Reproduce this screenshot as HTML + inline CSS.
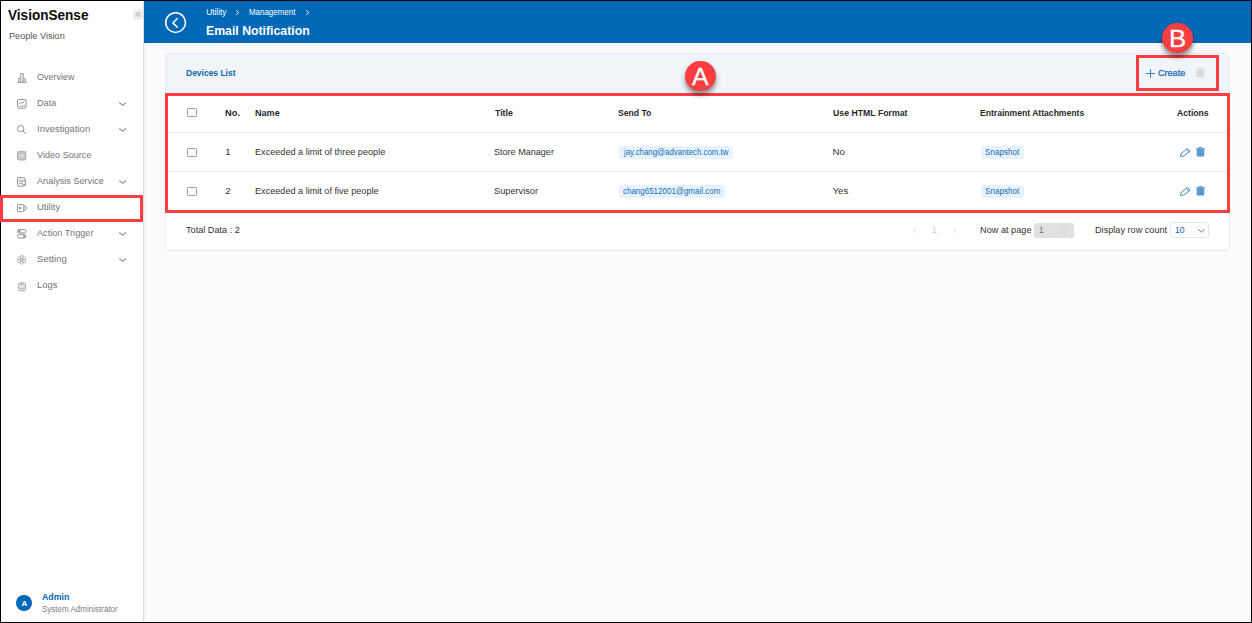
<!DOCTYPE html>
<html lang="en">
<head>
<meta charset="utf-8">
<title>VisionSense - Email Notification</title>
<style>
*{box-sizing:border-box;margin:0;padding:0}
html,body{width:1252px;height:623px;overflow:hidden;background:#fafbfd}
body{position:relative;font-family:"Liberation Sans",sans-serif;color:#333}
.abs{position:absolute}
.t{position:absolute;white-space:nowrap;line-height:1;transform-origin:0 50%}
svg{position:absolute;overflow:visible}
#frame{position:absolute;left:0;top:0;width:1252px;height:623px;border:1px solid #000;z-index:10;pointer-events:none}
#side{position:absolute;left:0;top:0;width:144px;height:623px;background:#fff;border-right:1px solid #dcdde0;box-shadow:1px 0 2px rgba(0,0,0,.06)}
#collapse{position:absolute;left:132.500px;top:9.300px;width:10.300px;height:10.400px;background:#efefef;border-radius:1px}
.ico *{fill:none;stroke:#939393;stroke-width:1}
.chev *{fill:none;stroke:#8f8f8f;stroke-width:1.050}
#hdr{position:absolute;left:144px;top:0;width:1108px;height:42.500px;background:#0068b7}
#card{position:absolute;left:165px;top:53px;width:1065px;height:197.500px;background:#fff;border:1px solid #e7eaee;border-radius:4px;overflow:hidden}
#cardhead{position:absolute;left:0;top:0;width:100%;height:40px;background:#f1f5f9}
.sep{position:absolute;left:166px;width:1063px;height:1px;background:#ececec}
.cb{position:absolute;left:187px;width:9.600px;height:9.200px;border:1px solid #9a9a9a;border-radius:1.200px;background:#fff}
.tag{position:absolute;height:12.800px;background:#e6f3fe;border-radius:2.500px}
.red{position:absolute;border:3px solid #f93d40;z-index:20}
.badge{position:absolute;width:31px;height:30.500px;border-radius:50%;background:#f93d40;box-shadow:0 4px 5px rgba(0,0,0,.45);z-index:25}
</style>
</head>
<body>
<aside>
<div id="side"></div>
<div id="collapse"></div>
<svg style="left:132.500px;top:9.300px" width="10.300" height="10.400" viewBox="0 0 10.300 10.400"><path d="M5 3 L3 5.300 L5 7.600 M7.600 3 L5.600 5.300 L7.600 7.600" fill="none" stroke="#9b9b9b" stroke-width=".8"/></svg>
<svg class="ico" style="left:17.2px;top:73px" width="10" height="10" viewBox="0 0 10 10"><path d="M.5 9.300h9M1.700 9.300v-4.300h2.100M3.800 9.300v-8.800h2.400v8.800M6.200 5.800h2v3.500"/></svg>
<svg class="ico" style="left:17px;top:99.2px" width="10" height="10" viewBox="0 0 10 10"><rect x=".5" y=".5" width="8.700" height="8.700" rx="1.500"/><path d="M2 5l1.800-1.800 1.300 1.200 2.500-2.200M2.400 8v-.8M4 8v-1.600M5.600 8v-1.200M7.200 8v-2.200"/></svg>
<svg class="ico" style="left:17.2px;top:125px" width="10" height="10" viewBox="0 0 10 10"><circle cx="3.600" cy="3.600" r="3.100"/><path d="M5.900 5.900l2.900 2.900"/></svg>
<svg class="ico" style="left:17.2px;top:151.2px" width="10" height="10" viewBox="0 0 10 10"><rect x=".4" y=".4" width="8.400" height="8.600" rx="1.300" style="fill:#bdbdbd;stroke:#a3a3a3;stroke-width:.8"/><path d="M1.300 2.300h6.600M1.300 7.100h6.600" style="stroke:#d9d9d9;stroke-width:.6"/><path d="M3.100 3.300l-1.700 1.400 1.700 1.400z" style="fill:#fff;stroke:none"/><path d="M4.300 3.400l1.700 1.300-1.700 1.300M6 4.700h1.600" style="stroke:#fff;stroke-width:.9;fill:none"/></svg>
<svg class="ico" style="left:17.2px;top:177.2px" width="10" height="10" viewBox="0 0 10 10"><rect x=".5" y=".5" width="7.600" height="8.600" rx="1.400"/><path d="M2 2.900h4.300M2 4.700h2.300M2 6.500h2.300" style="stroke-width:.8"/><circle cx="6.700" cy="5.800" r="1.900" style="fill:#fff"/><path d="M8 7.200l1.100 1.100"/></svg>
<svg class="ico" style="left:17.2px;top:203.6px" width="10" height="10" viewBox="0 0 10 10"><rect x=".5" y=".5" width="6.300" height="7.200" rx="1"/><path d="M2.200 2.500l2.700 1.600-2.700 1.600z" style="fill:#8c8c8c;stroke:none"/><path d="M6.800 2h1.200a1 1 0 0 1 1 1v2.200a1 1 0 0 1-1 1h-1.200"/></svg>
<svg class="ico" style="left:17.2px;top:228.8px" width="10" height="10" viewBox="0 0 10 10"><rect x=".5" y=".5" width="8.500" height="3.400" rx="1.700"/><rect x=".5" y="5.600" width="8.500" height="3.400" rx="1.700"/><circle cx="2.400" cy="2.200" r="1.100" style="fill:#8c8c8c;stroke:none"/><circle cx="7.100" cy="7.300" r="1.100" style="fill:#8c8c8c;stroke:none"/></svg>
<svg class="ico" style="left:17.1px;top:255.2px" width="10" height="10" viewBox="0 0 10 10"><circle cx="4.70" cy="2.00" r="1.75" style="stroke-width:.7;stroke:#a3a3a3"/><circle cx="2.32" cy="3.38" r="1.75" style="stroke-width:.7;stroke:#a3a3a3"/><circle cx="2.32" cy="6.12" r="1.75" style="stroke-width:.7;stroke:#a3a3a3"/><circle cx="4.70" cy="7.50" r="1.75" style="stroke-width:.7;stroke:#a3a3a3"/><circle cx="7.08" cy="6.13" r="1.75" style="stroke-width:.7;stroke:#a3a3a3"/><circle cx="7.08" cy="3.38" r="1.75" style="stroke-width:.7;stroke:#a3a3a3"/><circle cx="4.7" cy="4.75" r="1.100" style="stroke-width:.7;fill:#fff"/></svg>
<svg class="ico" style="left:18.1px;top:281.5px" width="10" height="10" viewBox="0 0 10 10"><rect x=".5" y="1.600" width="7" height="7.100" rx="1.100" style="fill:#e2e2e2;stroke:#a6a6a6;stroke-width:.9"/><rect x="2.400" y=".4" width="3.200" height="2" rx=".7" style="fill:#e2e2e2;stroke:#a6a6a6;stroke-width:.8"/><path d="M1.800 6.500h4.400" style="stroke:#b5b5b5;stroke-width:.8"/></svg>
<svg class="chev" style="left:119px;top:102px" width="7.400" height="4" viewBox="0 0 7.400 4"><path d="M.3 .5L3.700 3.300 7.100 .5"/></svg>
<svg class="chev" style="left:119px;top:128px" width="7.400" height="4" viewBox="0 0 7.400 4"><path d="M.3 .5L3.700 3.300 7.100 .5"/></svg>
<svg class="chev" style="left:119px;top:180px" width="7.400" height="4" viewBox="0 0 7.400 4"><path d="M.3 .5L3.700 3.300 7.100 .5"/></svg>
<svg class="chev" style="left:119px;top:232px" width="7.400" height="4" viewBox="0 0 7.400 4"><path d="M.3 .5L3.700 3.300 7.100 .5"/></svg>
<svg class="chev" style="left:119px;top:258px" width="7.400" height="4" viewBox="0 0 7.400 4"><path d="M.3 .5L3.700 3.300 7.100 .5"/></svg>
<div class="abs" style="left:16.200px;top:595px;width:16px;height:16px;border-radius:50%;background:#0068b7"></div>
<div class="t" id="brand" style="left:8.43px;top:6.85px;font-size:15px;font-weight:700;color:#0b0b0b;transform:scaleX(0.9048)">VisionSense</div>
<div class="t" id="sub" style="left:8.98px;top:30.66px;font-size:9.7px;font-weight:400;color:#555;transform:scaleX(0.9434)">People Vision</div>
<div class="t" id="m0" style="left:37.16px;top:72.49px;font-size:9.7px;font-weight:400;color:#757575;transform:scaleX(0.9269)">Overview</div>
<div class="t" id="m1" style="left:36.58px;top:98.09px;font-size:9.7px;font-weight:400;color:#757575;transform:scaleX(0.9403)">Data</div>
<div class="t" id="m2" style="left:36.82px;top:124.49px;font-size:9.7px;font-weight:400;color:#757575;transform:scaleX(0.9772)">Investigation</div>
<div class="t" id="m3" style="left:36.94px;top:150.48px;font-size:9.7px;font-weight:400;color:#757575;transform:scaleX(0.9389)">Video Source</div>
<div class="t" id="m4" style="left:37.42px;top:176.09px;font-size:9.7px;font-weight:400;color:#757575;transform:scaleX(0.9396)">Analysis Service</div>
<div class="t" id="m5" style="left:36.59px;top:202.09px;font-size:9.7px;font-weight:400;color:#757575;transform:scaleX(0.9785)">Utility</div>
<div class="t" id="m6" style="left:37.42px;top:228.09px;font-size:9.7px;font-weight:400;color:#757575;transform:scaleX(0.9448)">Action Trigger</div>
<div class="t" id="m7" style="left:36.80px;top:254.49px;font-size:9.7px;font-weight:400;color:#757575;transform:scaleX(0.9871)">Setting</div>
<div class="t" id="m8" style="left:36.53px;top:280.09px;font-size:9.7px;font-weight:400;color:#757575;transform:scaleX(0.9765)">Logs</div>
<div class="t" id="ava" style="left:21.51px;top:599.83px;font-size:8px;font-weight:700;color:#fff;transform:scaleX(1.0000)">A</div>
<div class="t" id="adm" style="left:42.47px;top:592.71px;font-size:9.3px;font-weight:700;color:#0a66b3;transform:scaleX(0.9449)">Admin</div>
<div class="t" id="sys" style="left:42.14px;top:605.06px;font-size:8.3px;font-weight:400;color:#7d7d7d;transform:scaleX(0.9663)">System Administrator</div>
</aside>
<header>
<div id="hdr"></div>
<svg style="left:164.800px;top:11.900px" width="21.200" height="21.200" viewBox="0 0 21.200 21.200"><circle cx="10.600" cy="10.600" r="9.850" fill="none" stroke="#fff" stroke-width="1.500"/><path d="M12.700 6.200L7.900 10.900l4.800 4.700" fill="none" stroke="#fff" stroke-width="1.500"/></svg>
<svg style="left:236.3px;top:9.800px" width="3.200" height="5" viewBox="0 0 3.200 5"><path d="M.3 .2L2.800 2.500 .3 4.800" fill="none" stroke="#fff" stroke-width=".95"/></svg>
<svg style="left:306px;top:9.800px" width="3.200" height="5" viewBox="0 0 3.200 5"><path d="M.3 .2L2.800 2.500 .3 4.800" fill="none" stroke="#fff" stroke-width=".95"/></svg>
<div class="t" id="bc1" style="left:206.22px;top:7.77px;font-size:8.3px;font-weight:400;color:#fff;transform:scaleX(1.0000)">Utility</div>
<div class="t" id="bc2" style="left:249.18px;top:7.77px;font-size:8.3px;font-weight:400;color:#fff;transform:scaleX(0.9574)">Management</div>
<div class="t" id="title" style="left:206.48px;top:23.55px;font-size:13.6px;font-weight:700;color:#fff;transform:scaleX(0.9032)">Email Notification</div>
</header>
<main>
<div id="card"><div id="cardhead"></div></div>
<svg style="left:1146px;top:68.700px" width="9" height="9" viewBox="0 0 9 9"><path d="M4.500 0v9M0 4.500h9" stroke="#2a7cc0" stroke-width=".9" fill="none"/></svg>
<svg style="left:1196.4px;top:68.3px" width="9" height="9.400" viewBox="0 0 9 9.400"><path d="M0 1.900h9M3 1.700v-1.200h3v1.200" fill="none" stroke="#d4d4d4" stroke-width=".8"/><path d="M1 2.300h7v6.300a.6 .6 0 0 1-.6 .6h-5.800a.6 .6 0 0 1-.6-.6z" fill="#dcdcdc" stroke="#d4d4d4" stroke-width=".5"/><path d="M3.100 3.300v4.800M4.500 3.300v4.800M5.900 3.300v4.800" fill="none" stroke="#d4d4d4" stroke-width=".55" opacity=".75"/></svg>
<div class="cb" style="top:107.800px"></div>
<div class="sep" style="top:132px"></div>
<div class="sep" style="top:171px"></div>
<div class="cb" style="top:147.6px"></div>
<div class="tag" style="left:618.800px;top:145.9px;width:113.9px"></div>
<div class="tag" style="left:980.700px;top:145.9px;width:43.200px"></div>
<svg style="left:1179.700px;top:148.0px" width="10.400" height="8.800" viewBox="0 0 10.400 8.800"><path d="M.5 8.300l.5-2.300 5.600-5a1.200 1.200 0 0 1 1.600 .1l1.200 1.300a1 1 0 0 1-.1 1.400l-5.700 4.300zM6.200 1.400l2.700 2.800" fill="none" stroke="#2a7cc0" stroke-width=".9"/></svg>
<svg style="left:1196.3px;top:147.4px" width="9" height="9.400" viewBox="0 0 9 9.400"><path d="M0 1.900h9M3 1.700v-1.200h3v1.200" fill="none" stroke="#2f7fc3" stroke-width=".8"/><path d="M1 2.300h7v6.300a.6 .6 0 0 1-.6 .6h-5.800a.6 .6 0 0 1-.6-.6z" fill="#68a5d9" stroke="#2f7fc3" stroke-width=".5"/><path d="M3.100 3.300v4.800M4.500 3.300v4.800M5.900 3.300v4.800" fill="none" stroke="#2f7fc3" stroke-width=".55" opacity=".75"/></svg>
<div class="cb" style="top:186.5px"></div>
<div class="tag" style="left:618.800px;top:184.8px;width:106px"></div>
<div class="tag" style="left:980.700px;top:184.8px;width:43.200px"></div>
<svg style="left:1179.700px;top:186.9px" width="10.400" height="8.800" viewBox="0 0 10.400 8.800"><path d="M.5 8.300l.5-2.300 5.600-5a1.200 1.200 0 0 1 1.600 .1l1.200 1.300a1 1 0 0 1-.1 1.400l-5.700 4.300zM6.200 1.400l2.700 2.800" fill="none" stroke="#2a7cc0" stroke-width=".9"/></svg>
<svg style="left:1196.3px;top:186.3px" width="9" height="9.400" viewBox="0 0 9 9.400"><path d="M0 1.900h9M3 1.700v-1.200h3v1.200" fill="none" stroke="#2f7fc3" stroke-width=".8"/><path d="M1 2.300h7v6.300a.6 .6 0 0 1-.6 .6h-5.800a.6 .6 0 0 1-.6-.6z" fill="#68a5d9" stroke="#2f7fc3" stroke-width=".5"/><path d="M3.100 3.300v4.800M4.500 3.300v4.800M5.900 3.300v4.800" fill="none" stroke="#2f7fc3" stroke-width=".55" opacity=".75"/></svg>
<svg style="left:913px;top:228px" width="3.200" height="5" viewBox="0 0 3.200 5"><path d="M2.800 .3L.4 2.500 2.800 4.700" fill="none" stroke="#d2d2d2" stroke-width=".8"/></svg>
<svg style="left:953px;top:228px" width="3.200" height="5" viewBox="0 0 3.200 5"><path d="M.4 .3L2.800 2.500 .4 4.700" fill="none" stroke="#d2d2d2" stroke-width=".8"/></svg>
<div class="abs" style="left:1034px;top:222.800px;width:39.700px;height:15.200px;background:#e1e1e1;border-radius:2.500px"></div>
<svg style="left:1060.600px;top:226.300px" width="5.700" height="8.200" viewBox="0 0 5.700 8.200"><path d="M.4 3.200L2.850 .7 5.300 3.200M.4 5L2.850 7.500 5.300 5" fill="none" stroke="#cdcdcd" stroke-width=".8"/></svg>
<div class="abs" style="left:1169.500px;top:222.300px;width:39.100px;height:15.700px;background:#fff;border:1px solid #e6e6e6;border-radius:3px"></div>
<svg style="left:1198px;top:228.700px" width="6.800" height="3.600" viewBox="0 0 6.800 3.600"><path d="M.4 .4L3.400 3.100 6.400 .4" fill="none" stroke="#2a7cc0" stroke-width=".9"/></svg>
<div class="t" id="dev" style="left:186.29px;top:67.98px;font-size:9.5px;font-weight:700;color:#0a66b3;transform:scaleX(0.8932)">Devices List</div>
<div class="t" id="create" style="left:1158.07px;top:68.43px;font-size:9.7px;font-weight:400;color:#1266b4;transform:scaleX(0.9364);-webkit-text-stroke:.25px #1266b4">Create</div>
<div class="t" id="h0" style="left:225.12px;top:107.80px;font-size:9.5px;font-weight:700;color:#292929;transform:scaleX(0.9782)">No.</div>
<div class="t" id="h1" style="left:255.27px;top:107.80px;font-size:9.5px;font-weight:700;color:#292929;transform:scaleX(0.9560)">Name</div>
<div class="t" id="h2" style="left:494.69px;top:107.80px;font-size:9.5px;font-weight:700;color:#292929;transform:scaleX(0.9213)">Title</div>
<div class="t" id="h3" style="left:618.09px;top:107.80px;font-size:9.5px;font-weight:700;color:#292929;transform:scaleX(0.9054)">Send To</div>
<div class="t" id="h4" style="left:832.98px;top:107.80px;font-size:9.5px;font-weight:700;color:#292929;transform:scaleX(0.9181)">Use HTML Format</div>
<div class="t" id="h5" style="left:980.34px;top:107.80px;font-size:9.5px;font-weight:700;color:#292929;transform:scaleX(0.9038)">Entrainment Attachments</div>
<div class="t" id="h6" style="left:1176.86px;top:107.80px;font-size:9.5px;font-weight:700;color:#292929;transform:scaleX(0.9082)">Actions</div>
<div class="t" id="r1a" style="left:225.15px;top:146.79px;font-size:9.7px;font-weight:400;color:#333;transform:scaleX(1.0000)">1</div>
<div class="t" id="r1b" style="left:255.34px;top:146.79px;font-size:9.7px;font-weight:400;color:#333;transform:scaleX(0.9409)">Exceeded a limit of three people</div>
<div class="t" id="r1c" style="left:493.93px;top:146.79px;font-size:9.7px;font-weight:400;color:#333;transform:scaleX(0.9351)">Store Manager</div>
<div class="t" id="r1d" style="left:623.59px;top:148.33px;font-size:8.3px;font-weight:400;color:#1a6bb3;transform:scaleX(0.9473)">jay.chang@advantech.com.tw</div>
<div class="t" id="r1e" style="left:832.52px;top:146.79px;font-size:9.7px;font-weight:400;color:#333;transform:scaleX(1.0000)">No</div>
<div class="t" id="r1f" style="left:985.10px;top:148.33px;font-size:8.3px;font-weight:400;color:#1a6bb3;transform:scaleX(0.9760)">Snapshot</div>
<div class="t" id="r2a" style="left:225.34px;top:185.79px;font-size:9.7px;font-weight:400;color:#333;transform:scaleX(1.0000)">2</div>
<div class="t" id="r2b" style="left:255.31px;top:185.79px;font-size:9.7px;font-weight:400;color:#333;transform:scaleX(0.9402)">Exceeded a limit of five people</div>
<div class="t" id="r2c" style="left:494.11px;top:185.79px;font-size:9.7px;font-weight:400;color:#333;transform:scaleX(0.9515)">Supervisor</div>
<div class="t" id="r2d" style="left:623.48px;top:187.07px;font-size:8.3px;font-weight:400;color:#1a6bb3;transform:scaleX(0.9619)">chang6512001@gmail.com</div>
<div class="t" id="r2e" style="left:832.52px;top:185.79px;font-size:9.7px;font-weight:400;color:#333;transform:scaleX(1.0000)">Yes</div>
<div class="t" id="r2f" style="left:985.10px;top:187.07px;font-size:8.3px;font-weight:400;color:#1a6bb3;transform:scaleX(0.9760)">Snapshot</div>
<div class="t" id="f0" style="left:186.17px;top:225.19px;font-size:9.7px;font-weight:400;color:#333;transform:scaleX(0.9421)">Total Data : 2</div>
<div class="t" id="f1" style="left:931.86px;top:225.19px;font-size:9.7px;font-weight:400;color:#cfcfcf;transform:scaleX(1.0000)">1</div>
<div class="t" id="f2" style="left:980.13px;top:225.19px;font-size:9.7px;font-weight:400;color:#333;transform:scaleX(0.9477)">Now at page</div>
<div class="t" id="f3" style="left:1039.01px;top:226.47px;font-size:8.4px;font-weight:400;color:#6b6b6b;transform:scaleX(1.0000)">1</div>
<div class="t" id="f4" style="left:1094.76px;top:225.19px;font-size:9.7px;font-weight:400;color:#333;transform:scaleX(0.9437)">Display row count</div>
<div class="t" id="f5" style="left:1175.06px;top:226.47px;font-size:8.4px;font-weight:400;color:#1266b4;transform:scaleX(1.0281)">10</div>
</main>
<div id="notes">
<div class="red" style="left:0;top:195px;width:143px;height:27px"></div>
<div class="red" style="left:165px;top:93px;width:1065px;height:120px"></div>
<div class="red" style="left:1136px;top:55px;width:83px;height:36px"></div>
<div class="badge" style="left:685px;top:60.600px"></div>
<div class="badge" style="left:1162px;top:22.800px"></div>
<div class="t" id="ba" style="left:692.01px;top:65.80px;font-size:23.2px;font-weight:400;color:#fff;transform:scaleX(1.0693);z-index:30;-webkit-text-stroke:.3px #fff">A</div>
<div class="t" id="bb" style="left:1168.72px;top:27.88px;font-size:23.2px;font-weight:400;color:#fff;transform:scaleX(1.1086);z-index:30;-webkit-text-stroke:.3px #fff">B</div>
</div>
<div id="frame"></div>
</body>
</html>
